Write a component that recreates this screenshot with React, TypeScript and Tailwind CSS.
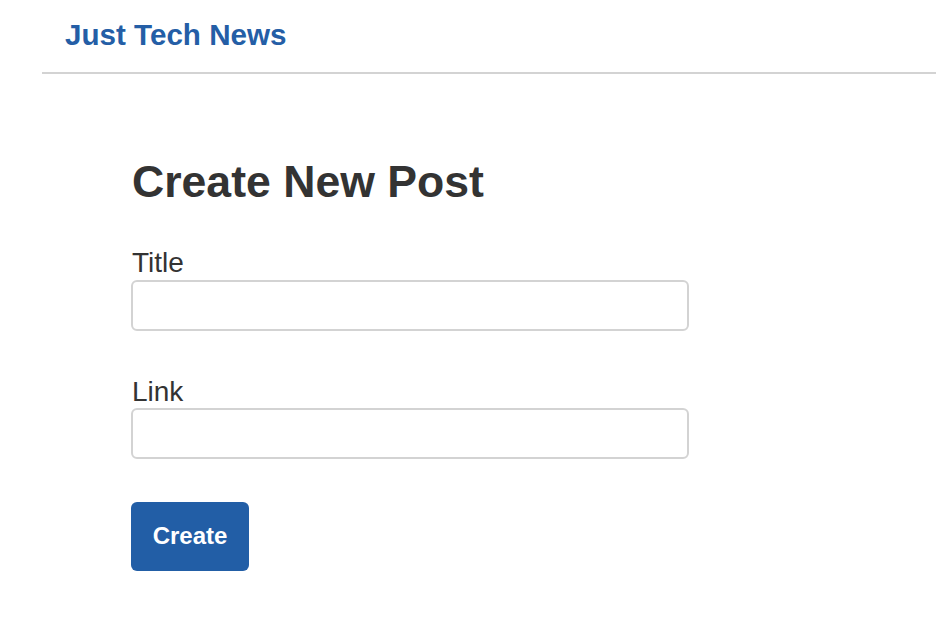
import React from "react";

export default function App() {
  return (
    <div className="min-h-screen bg-white" style={{ fontFamily: '"Liberation Sans", Arial, Helvetica, sans-serif' }}>
      <header className="ml-[42px] h-[74px] border-b-2 border-[#d3d3d3] pt-[20px] pl-[23px]">
        <a href="#" className="block text-[29.6px] leading-none font-bold text-[#245ea6]">Just Tech News</a>
      </header>
      <main className="pl-[131px]">
        <h1 className="mt-[86px] pl-[1px] text-[44.6px] leading-none font-bold text-[#333333]">Create New Post</h1>
        <form className="w-[558px]" onSubmit={(e) => e.preventDefault()}>
          <label className="mt-[44px] block pl-[1px] text-[28px] leading-none text-[#333333]">Title</label>
          <input type="text" className="mt-[3px] block h-[51px] w-full rounded-[6px] border-2 border-[#d3d3d3] px-3 outline-none" />
          <label className="mt-[47px] block pl-[1px] text-[28px] leading-none text-[#333333]">Link</label>
          <input type="text" className="mt-[2px] block h-[51px] w-full rounded-[6px] border-2 border-[#d3d3d3] px-3 outline-none" />
          <button type="submit" className="mt-[43px] flex h-[69px] w-[118px] items-center justify-center rounded-[6px] bg-[#225ea6] text-[24px] leading-none font-bold text-white">
            Create
          </button>
        </form>
      </main>
    </div>
  );
}
